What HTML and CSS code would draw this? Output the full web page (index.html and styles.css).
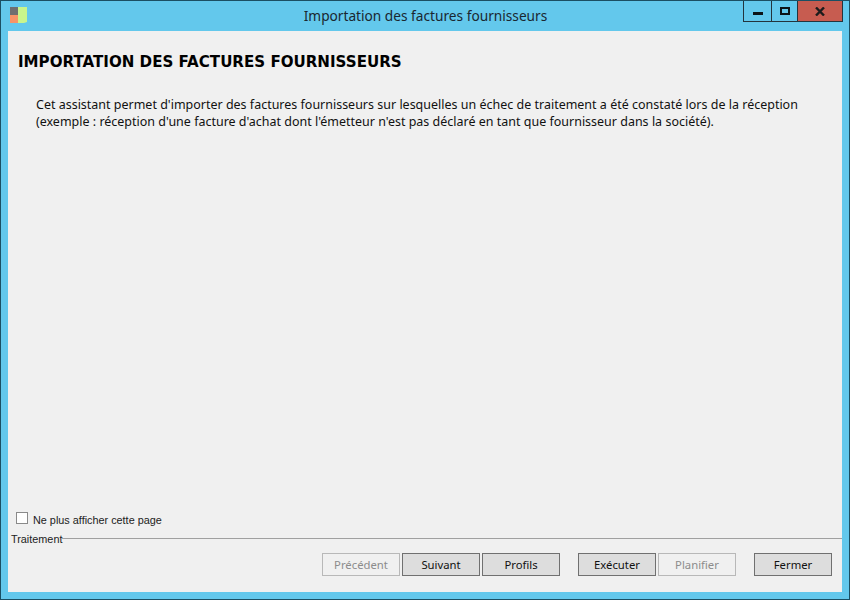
FILE: index.html
```html
<!DOCTYPE html>
<html>
<head>
    <title>Importation des factures fournisseurs</title>
    <meta charset="utf-8" />
    <link rel="stylesheet" href="styles.css">
</head>
<body>
    <div class="window">
        <div class="titlebar">
            <svg class="appicon" width="17" height="17" viewBox="0 0 17 17">
                <rect x="0" y="0" width="8" height="8" fill="#6f6f6f" />
                <rect x="0" y="8" width="8" height="8" fill="#f79467" />
                <path d="M8 0H17V15L14 16H8Z" fill="#c9f58c" />
            </svg>
            <div class="title">Importation des factures fournisseurs</div>
            <div class="controls">
                <div class="ctrl ctrl-min"><span class="min-glyph"></span></div>
                <div class="ctrl ctrl-max"><span class="max-glyph"></span></div>
                <div class="ctrl ctrl-close">
                    <svg width="10" height="9" viewBox="0 0 10 9">
                        <path d="M1 .5L9 8.5M9 .5L1 8.5" stroke="#1c1c1c" stroke-width="2.4" fill="none" />
                    </svg>
                </div>
            </div>
        </div>
        <div class="content">
            <h1 class="heading">IMPORTATION DES FACTURES FOURNISSEURS</h1>
            <p class="intro">Cet assistant permet d'importer des factures fournisseurs sur lesquelles un échec de traitement a été constaté lors de la réception<br>(exemple : réception d'une facture d'achat dont l'émetteur n'est pas déclaré en tant que fournisseur dans la société).</p>
            <div class="spacer"></div>
            <label class="skip"><span class="checkbox"></span>Ne plus afficher cette page</label>
            <div class="group">
                <span class="group-label">Traitement</span>
                <span class="group-line"></span>
            </div>
            <div class="buttons">
                <div class="btn-set">
                    <button class="btn" disabled>Précédent</button>
                    <button class="btn">Suivant</button>
                    <button class="btn">Profils</button>
                </div>
                <div class="btn-set">
                    <button class="btn">Exécuter</button>
                    <button class="btn" disabled>Planifier</button>
                </div>
                <div class="btn-set">
                    <button class="btn">Fermer</button>
                </div>
            </div>
        </div>
    </div>
</body>
</html>
```

FILE: styles.css
```css
html, body {
    margin: 0;
    padding: 0;
}

body {
    width: 850px;
    height: 600px;
    overflow: hidden;
    font-family: "Noto Sans", "DejaVu Sans", sans-serif;
    font-size: 12px;
    color: #000;
}

.window {
    box-sizing: border-box;
    width: 850px;
    height: 600px;
    display: flex;
    flex-direction: column;
    background-color: #63c8ec;
    border: 1px solid #1b4f63;
    padding: 0 7px 7px 7px;
}

.titlebar {
    height: 30px;
    display: flex;
    align-items: flex-start;
}

.appicon {
    margin: 6px 0 0 2px;
    flex: none;
}

.title {
    flex: 1;
    margin-top: 5px;
    padding-left: 81px;
    text-align: center;
    font-size: 13.7px;
    line-height: 19px;
    color: #1a2730;
}

.controls {
    display: flex;
    height: 21px;
    margin-right: -1px;
    border: 1px solid #23343d;
    border-top: 0;
    box-sizing: border-box;
}

.ctrl {
    display: flex;
    align-items: center;
    justify-content: center;
    box-sizing: border-box;
}

.ctrl-min {
    width: 28px;
    border-right: 1px solid #23343d;
}

.ctrl-max {
    width: 26px;
    border-right: 1px solid #23343d;
}

.ctrl-close {
    width: 44px;
    background-color: #c75c50;
}

.min-glyph {
    width: 10px;
    height: 3px;
    margin-top: 5px;
    background-color: #0c1418;
}

.max-glyph {
    box-sizing: border-box;
    width: 10px;
    height: 8px;
    border: 2px solid #0c1418;
}

.content {
    flex: 1;
    display: flex;
    flex-direction: column;
    background-color: #f0f0f0;
    min-height: 0;
}

.heading {
    margin: 21px 0 0 10px;
    font-family: "DejaVu Sans", sans-serif;
    font-size: 15.08px;
    line-height: 20px;
    font-weight: bold;
    color: #000;
}

.intro {
    margin: 24px 0 0 28px;
    font-size: 12.47px;
    line-height: 17px;
    word-spacing: 0.06px;
    white-space: nowrap;
    color: #111;
}

.spacer {
    flex: 1;
}

.skip {
    display: flex;
    align-items: center;
    height: 16px;
    margin-left: 8px;
    font-family: "Liberation Sans", sans-serif;
    font-size: 10.85px;
    color: #222;
}

.checkbox {
    box-sizing: border-box;
    width: 12px;
    height: 12px;
    margin-right: 5px;
    border: 1px solid #8a8a8a;
    background-color: #fff;
    position: relative;
    top: -2px;
}

.group {
    display: flex;
    align-items: center;
    height: 14px;
    margin-top: 3px;
    margin-left: 3px;
    font-family: "Liberation Sans", sans-serif;
    font-size: 10.85px;
    color: #222;
}

.group-label {
    margin-top: 2px;
}

.group-line {
    flex: 1;
    height: 1px;
    background-color: #a0a0a0;
}

.buttons {
    display: flex;
    justify-content: flex-end;
    gap: 18px;
    margin: 8px 10px 16px 0;
}

.btn-set {
    display: flex;
    gap: 2px;
}

.btn {
    box-sizing: border-box;
    width: 78px;
    height: 23px;
    padding: 0;
    border: 1px solid #707070;
    background-color: #dddddd;
    font-family: "Noto Sans", "DejaVu Sans", sans-serif;
    font-size: 11.3px;
    color: #111;
}

.btn:disabled {
    border-color: #b8b8b8;
    background-color: #f0f0f0;
    color: #8c8c8c;
}
```
